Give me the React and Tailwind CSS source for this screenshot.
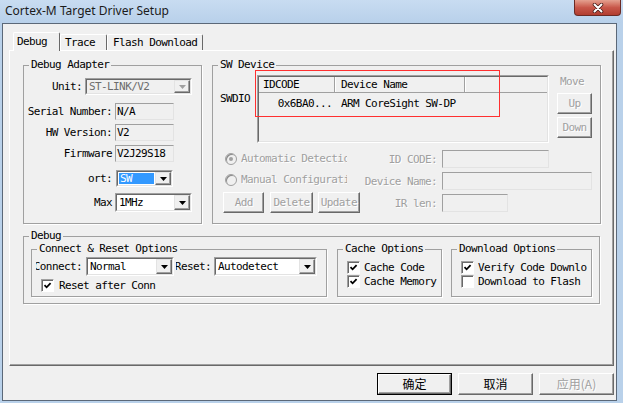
import React from 'react';

const mono = "font-['DejaVu_Sans_Mono',monospace] text-[11px] leading-[12px] tracking-[-0.6px] text-black";
const dim = 'text-[#a0a0a0] [text-shadow:1px_1px_0_#ffffff]';

function DownArrow({ disabled }) {
  return (
    <svg width="7" height="4" viewBox="0 0 7 4">
      <path d="M0 0h7L3.5 4z" fill={disabled ? '#a0a0a0' : '#000000'} />
    </svg>
  );
}

function Combo({ value, className, selected, disabled }) {
  return (
    <div className={`flex border border-[#a0a0a0] border-r-white border-b-white ${className}`}>
      <div className={`flex flex-1 border border-[#696969] border-r-[#e3e3e3] border-b-[#e3e3e3] ${disabled ? 'bg-[#f0f0f0]' : 'bg-white'}`}>
        <div className="flex flex-1 items-center overflow-hidden whitespace-nowrap p-px">
          {selected ? (
            <span className="flex h-full flex-1 items-center bg-[#3399ff] pl-px text-white">{value}</span>
          ) : (
            <span className={`pl-px ${disabled ? 'text-[#6d6d6d]' : ''}`}>{value}</span>
          )}
        </div>
        <div className="flex w-[16px] items-center justify-center border border-[#e3e3e3] border-r-[#696969] border-b-[#696969] bg-[#f0f0f0] shadow-[inset_-1px_-1px_0_#a0a0a0]">
          <DownArrow disabled={disabled} />
        </div>
      </div>
    </div>
  );
}

function Field({ value, className }) {
  return (
    <div className={`flex items-center overflow-hidden whitespace-nowrap border border-[#a0a0a0] border-r-[#e3e3e3] border-b-[#e3e3e3] pl-px ${className}`}>
      {value}
    </div>
  );
}

function Btn({ children, className, disabled }) {
  return (
    <div className={`flex items-center justify-center border border-white border-r-[#696969] border-b-[#696969] bg-[#f0f0f0] shadow-[inset_-1px_-1px_0_#a0a0a0] ${disabled ? dim : ''} ${className}`}>
      {children}
    </div>
  );
}

function Check({ checked, className = '' }) {
  return (
    <div className={`flex h-[13px] w-[13px] shrink-0 items-center justify-center border border-[#a0a0a0] border-r-white border-b-white bg-white shadow-[inset_1px_1px_0_#696969] ${className}`}>
      {checked && (
        <svg width="9" height="9" viewBox="0 0 9 9">
          <path d="M1.5 4.2L3.6 6.3L7.6 2.2" fill="none" stroke="#000" strokeWidth="1.8" />
        </svg>
      )}
    </div>
  );
}

function Radio({ checked }) {
  return (
    <div className="ml-[2px] flex h-[12px] w-[12px] shrink-0 items-center justify-center rounded-full border border-[#a0a0a0] bg-[#f0f0f0] shadow-[inset_1px_1px_0_#8a8a8a]">
      {checked && <div className="h-[4px] w-[4px] rounded-full bg-[#a0a0a0]" />}
    </div>
  );
}

function Group({ title, className, children }) {
  return (
    <fieldset className={`min-w-0 border border-[#a0a0a0] shadow-[1px_1px_0_#ffffff] ${className}`}>
      <legend className="ml-[5px] px-[2px]">{title}</legend>
      {children}
    </fieldset>
  );
}

function TitleBar() {
  return (
    <div className="flex h-[23px] shrink-0 items-start bg-gradient-to-b from-[#c8dcf1] to-[#b8d0ea]">
      <span className="pl-[5px] pt-[3px] font-['Noto_Sans',sans-serif] text-[12px] leading-[15px] tracking-normal text-[#1b1b1b]">
        Cortex-M Target Driver Setup
      </span>
      <div className="mr-[2px] ml-auto flex h-[16px] w-[47px] items-center justify-center rounded-b-[4px] border border-t-0 border-[#6b2a24] bg-gradient-to-b from-[#e4a090] via-[#c8574a] to-[#b13d30]">
        <svg width="14" height="10" viewBox="0 0 14 10">
          <path d="M3.5 1.5l7 7M10.5 1.5l-7 7" stroke="#4a1d18" strokeWidth="3.6" strokeLinecap="round" />
          <path d="M3.5 1.5l7 7M10.5 1.5l-7 7" stroke="#ffffff" strokeWidth="2" strokeLinecap="round" />
        </svg>
      </div>
    </div>
  );
}

function Tabs() {
  return (
    <div className="relative z-10 flex h-[18px] items-end pl-[4px]">
      <div className="-mb-px h-[19px] w-[47px] rounded-t-[2px] border border-b-0 border-white border-r-[#696969] bg-[#f0f0f0] pt-[3px] pl-[3px]">
        Debug
      </div>
      <div className="h-[16px] w-[47px] rounded-t-[2px] border border-b-0 border-white border-r-[#696969] pt-[2px] pl-[4px]">
        Trace
      </div>
      <div className="h-[16px] w-[96px] rounded-t-[2px] border border-b-0 border-white border-r-[#696969] pt-[2px] pl-[5px]">
        Flash Download
      </div>
    </div>
  );
}

function DebugAdapter() {
  return (
    <Group title="Debug Adapter" className="w-[179px]">
      <div className="flex items-center pt-[7px]">
        <div className="w-[58px] text-right">Unit:</div>
        <Combo value="ST-LINK/V2" disabled className="ml-[3px] h-[17px] w-[107px]" />
      </div>
      <div className="mt-[8px] flex items-center">
        <div className="w-[88px] text-right">Serial Number:</div>
        <Field value="N/A" className="ml-[3px] h-[17px] w-[59px]" />
      </div>
      <div className="mt-[4px] flex items-center">
        <div className="w-[88px] text-right">HW Version:</div>
        <Field value="V2" className="ml-[3px] h-[17px] w-[59px]" />
      </div>
      <div className="mt-[4px] flex items-center">
        <div className="w-[88px] text-right">Firmware</div>
        <Field value="V2J29S18" className="ml-[3px] h-[17px] w-[59px]" />
      </div>
      <div className="mt-[8px] flex items-center">
        <div className="w-[88px] text-right">ort:</div>
        <Combo value="SW" selected className="ml-[4px] h-[17px] w-[57px]" />
      </div>
      <div className="mt-[6px] flex items-center">
        <div className="w-[88px] text-right">Max</div>
        <Combo value="1MHz" className="ml-[3px] h-[19px] w-[77px]" />
      </div>
    </Group>
  );
}

function SwDevice() {
  return (
    <Group title="SW Device" className="w-[389px] pb-[10px]">
      <div className="flex pt-[4px]">
        <div className="w-[44px] pt-[18px] pl-[7px]">SWDIO</div>
        <div className="relative h-[68px] w-[292px] border border-[#a0a0a0] border-r-white border-b-white">
          <div className="h-full border border-[#696969] border-r-[#e3e3e3] border-b-[#e3e3e3]">
            <div className="flex h-[16px] border-b border-[#a0a0a0]">
              <div className="w-[76px] border-r border-[#a0a0a0] pt-[2px] pl-[4px]">IDCODE</div>
              <div className="w-[130px] border-r border-l border-[#a0a0a0] border-l-white pt-[2px] pl-[5px]">Device Name</div>
              <div className="flex-1 border-l border-white" />
            </div>
            <div className="mt-[5px] flex">
              <div className="w-[76px] pr-[3px] text-right">0x6BA0...</div>
              <div className="pl-[6px]">ARM CoreSight SW-DP</div>
            </div>
          </div>
          <div className="absolute top-[-6px] left-[-3px] h-[47px] w-[245px] border border-[#ff3030]" />
        </div>
        <div className="ml-[8px] flex w-[35px] flex-col">
          <div className={`pt-[1px] pl-[3px] ${dim}`}>Move</div>
          <Btn disabled className="mt-[5px] h-[21px] w-[35px]">Up</Btn>
          <Btn disabled className="mt-[3px] h-[21px] w-[35px]">Down</Btn>
        </div>
      </div>
      <div className="mt-[7px] flex">
        <div className="w-[147px] pl-[10px]">
          <div className="flex h-[18px] items-center">
            <Radio checked />
            <div className={`ml-[4px] w-[106px] overflow-hidden whitespace-nowrap ${dim}`}>Automatic Detection</div>
          </div>
          <div className="mt-[3px] flex h-[18px] items-center">
            <Radio />
            <div className={`ml-[4px] w-[106px] overflow-hidden whitespace-nowrap ${dim}`}>Manual Configuration</div>
          </div>
          <div className="mt-[3px] flex">
            <Btn disabled className="h-[21px] w-[48px]">Add</Btn>
            <Btn disabled className="ml-[6px] h-[21px] w-[49px]">Delete</Btn>
            <Btn disabled className="ml-[5px] h-[21px] w-[49px]">Update</Btn>
          </div>
        </div>
        <div className="grid grid-cols-[77px_auto] gap-x-[5px] gap-y-[3px]">
          <div className={`flex items-center justify-end ${dim}`}>ID CODE:</div>
          <Field className="h-[18px] w-[107px]" />
          <div className={`flex items-center justify-end ${dim}`}>Device Name:</div>
          <Field className="h-[18px] w-[150px]" />
          <div className={`flex items-center justify-end ${dim}`}>IR len:</div>
          <Field className="h-[18px] w-[66px]" />
        </div>
      </div>
    </Group>
  );
}

function DebugGroup() {
  return (
    <Group title="Debug" className="mt-[6px] w-[577px] pb-[6px]">
      <div className="mt-px flex items-stretch pl-[7px]">
        <Group title="Connect & Reset Options" className="w-[296px] pb-[4px]">
          <div className="mt-[2px] flex items-center">
            <div className="ml-[4px] flex w-[46px] justify-end overflow-hidden whitespace-nowrap">Connect:</div>
            <Combo value="Normal" className="ml-[4px] h-[19px] w-[88px]" />
            <div className="ml-[2px] flex w-[35px] justify-end overflow-hidden whitespace-nowrap">Reset:</div>
            <Combo value="Autodetect" className="ml-[3px] h-[19px] w-[103px]" />
          </div>
          <div className="mt-[3px] flex items-center">
            <Check checked className="ml-[9px]" />
            <span className="ml-[5px]">Reset after Conn</span>
          </div>
        </Group>
        <Group title="Cache Options" className="ml-[10px] w-[105px]">
          <div className="mt-[6px] flex items-center pl-[9px]">
            <Check checked />
            <span className="ml-[4px]">Cache Code</span>
          </div>
          <div className="mt-px flex items-center pl-[9px]">
            <Check checked />
            <span className="ml-[4px]">Cache Memory</span>
          </div>
        </Group>
        <Group title="Download Options" className="ml-[9px] w-[141px]">
          <div className="mt-[6px] flex items-center pl-[9px]">
            <Check checked />
            <span className="ml-[4px] whitespace-nowrap">Verify Code Downlo</span>
          </div>
          <div className="mt-px flex items-center pl-[9px]">
            <Check />
            <span className="ml-[4px] whitespace-nowrap">Download to Flash</span>
          </div>
        </Group>
      </div>
    </Group>
  );
}

function Footer() {
  const cjk = "font-['Noto_Sans_CJK_SC',sans-serif] text-[12px] leading-[14px] tracking-normal";
  return (
    <div className={`mt-[7px] flex justify-end gap-[6px] pr-[2px] ${cjk}`}>
      <div className="h-[22px] w-[75px] border border-black">
        <Btn className="h-full w-full">确定</Btn>
      </div>
      <Btn className="h-[22px] w-[75px]">取消</Btn>
      <Btn disabled className="h-[22px] w-[75px]">应用(A)</Btn>
    </div>
  );
}

export default function App() {
  return (
    <div className={`flex h-[403px] w-[623px] flex-col overflow-hidden bg-[#b9d1ea] ${mono}`}>
      <TitleBar />
      <div className="mr-[6px] ml-[2px] flex h-[378px] flex-col border border-[#5b6878] bg-[#f0f0f0]">
        <div className="pt-[8px] pr-[2px] pl-[6px]">
          <Tabs />
          <div className="h-[316px] border border-white border-r-[#696969] border-b-[#696969] pt-[8px] pl-[13px] shadow-[inset_-1px_-1px_0_#a0a0a0]">
            <div className="flex items-stretch gap-[10px]">
              <DebugAdapter />
              <SwDevice />
            </div>
            <DebugGroup />
          </div>
        </div>
        <Footer />
      </div>
    </div>
  );
}
